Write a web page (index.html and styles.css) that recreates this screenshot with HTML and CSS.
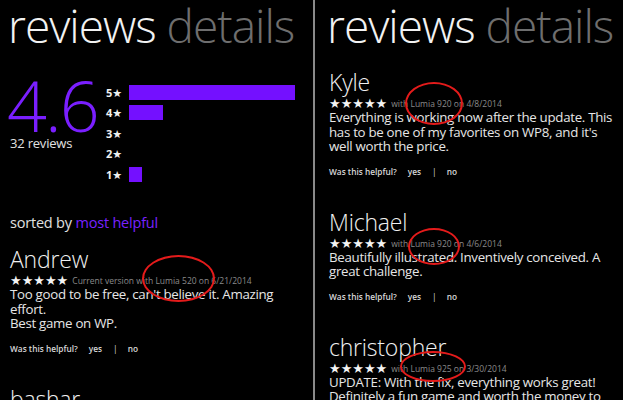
FILE: index.html
```html
<!DOCTYPE html>
<html>
<head>
<meta charset="utf-8">
<link rel="stylesheet" href="styles.css">
</head>
<body>
<div class="screens">
  <section class="panel panel-left">
    <h1 class="title"><span class="cur">reviews</span> <span class="next">details</span></h1>
    <div class="summary">
      <div class="score">
        <div class="big">4.6</div>
        <div class="count">32 reviews</div>
      </div>
      <div class="bars">
        <div class="row"><span class="lbl">5<i>★</i></span><span class="bar" style="width:166px"></span></div>
        <div class="row"><span class="lbl">4<i>★</i></span><span class="bar" style="width:34px"></span></div>
        <div class="row"><span class="lbl">3<i>★</i></span><span class="bar" style="width:0"></span></div>
        <div class="row"><span class="lbl">2<i>★</i></span><span class="bar" style="width:0"></span></div>
        <div class="row"><span class="lbl">1<i>★</i></span><span class="bar" style="width:13px"></span></div>
      </div>
    </div>
    <div class="sorted">sorted by <span class="accent">most helpful</span></div>
    <article class="review">
      <div class="name">Andrew</div>
      <div class="meta"><span class="stars">★★★★★</span><span class="info">Current version with Lumia 520 on 6/21/2014</span></div>
      <div class="text">Too good to be free, can't believe it. Amazing<br>effort.<br>Best game on WP.</div>
      <div class="helpful"><span>Was this helpful?</span><span class="yes">yes</span><span class="sep">|</span><span class="no">no</span></div>
      <span class="circle c-andrew"></span>
    </article>
    <article class="review">
      <div class="name">bashar</div>
    </article>
  </section>
  <div class="divider"></div>
  <section class="panel panel-right">
    <h1 class="title"><span class="cur">reviews</span> <span class="next">details</span></h1>
    <article class="review first">
      <div class="name">Kyle</div>
      <div class="meta"><span class="stars">★★★★★</span><span class="info">with Lumia 920 on 4/8/2014</span></div>
      <div class="text">Everything is working now after the update. This<br>has to be one of my favorites on WP8, and it's<br>well worth the price.</div>
      <div class="helpful"><span>Was this helpful?</span><span class="yes">yes</span><span class="sep">|</span><span class="no">no</span></div>
      <span class="circle c-kyle"></span>
    </article>
    <article class="review">
      <div class="name">Michael</div>
      <div class="meta"><span class="stars">★★★★★</span><span class="info">with Lumia 920 on 4/6/2014</span></div>
      <div class="text">Beautifully illustrated. Inventively conceived. A<br>great challenge.</div>
      <div class="helpful"><span>Was this helpful?</span><span class="yes">yes</span><span class="sep">|</span><span class="no">no</span></div>
      <span class="circle c-michael"></span>
    </article>
    <article class="review">
      <div class="name">christopher</div>
      <div class="meta"><span class="stars">★★★★★</span><span class="info">with Lumia 925 on 3/30/2014</span></div>
      <div class="text">UPDATE: With the fix, everything works great!<br>Definitely a fun game and worth the money to</div>
      <span class="circle c-chris"></span>
    </article>
  </section>
</div>
</body>
</html>
```

FILE: styles.css
```css
* { box-sizing: border-box; }
html, body {
  margin: 0;
  padding: 0;
  background: #000;
}
body {
  width: 623px;
  height: 400px;
  overflow: hidden;
  font-family: "Open Sans", "Noto Sans", sans-serif;
  color: #e8e8e8;
}
.screens {
  display: flex;
  height: 400px;
}
.panel {
  overflow: hidden;
  height: 400px;
}
.panel-left {
  width: 313px;
  padding-left: 10px;
}
.panel-right {
  flex: 1;
  padding-left: 14px;
}
.divider {
  width: 2px;
  background: #8a8a8a;
}
.title {
  margin: 0;
  height: 50px;
  font-size: 46px;
  line-height: 50px;
  font-weight: 300;
  white-space: nowrap;
  letter-spacing: -1px;
  margin-left: -2px;
}
.title .cur { color: #f2f2f2; }
.title .next { color: #6e6e6e; }

.summary {
  display: flex;
  margin-top: 25px;
  height: 138px;
}
.score {
  width: 96px;
}
.big {
  font-size: 70px;
  line-height: 60px;
  height: 60px;
  font-weight: 300;
  color: #7a1fff;
  letter-spacing: -2px;
  margin-left: -3px;
}
.count {
  font-size: 13px;
  line-height: 16px;
  color: #e0e0e0;
  letter-spacing: -0.2px;
}
.bars {
  padding-top: 7px;
  display: flex;
  flex-direction: column;
}
.row {
  display: flex;
  align-items: center;
  height: 20.5px;
}
.lbl {
  width: 23px;
  font-size: 11px;
  font-weight: 700;
  color: #f0f0f0;
}
.lbl i {
  font-style: normal;
  font-family: "DejaVu Sans", sans-serif;
  font-size: 11px;
}
.bar {
  display: block;
  height: 15px;
  background: #7410ff;
}
.sorted {
  font-size: 14.5px;
  line-height: 20px;
  color: #e0e0e0;
  letter-spacing: -0.2px;
}
.accent { color: #7a22ff; }

.review {
  position: relative;
  margin-top: 14px;
  margin-bottom: 32px;
}
.review.first { margin-top: 20px; }
.name {
  font-size: 23px;
  line-height: 24px;
  font-weight: 300;
  color: #f0f0f0;
  white-space: nowrap;
  letter-spacing: -0.2px;
}
.meta {
  display: flex;
  align-items: center;
  height: 16px;
  padding-top: 3px;
  white-space: nowrap;
}
.stars {
  font-family: "DejaVu Sans", sans-serif;
  font-size: 13px;
  letter-spacing: 0;
  color: #f4f4f4;
  margin-right: 4px;
}
.info {
  font-size: 8.5px;
  color: #8a8a8a;
}
.text {
  font-size: 13.3px;
  line-height: 14.5px;
  letter-spacing: -0.3px;
  white-space: nowrap;
  color: #e6e6e6;
}
.helpful {
  margin-top: 12px;
  font-size: 8.3px;
  line-height: 12px;
  font-weight: 600;
  color: #d8d8d8;
  display: flex;
  white-space: nowrap;
}
.helpful .yes { margin-left: 11px; }
.helpful .sep { margin-left: 11px; font-weight: 400; }
.helpful .no { margin-left: 10px; }

.circle {
  position: absolute;
  border: 2px solid #e41b1b;
  border-radius: 50%;
}
.c-andrew { left: 132px; top: 8px; width: 73px; height: 47px; }
.c-kyle { left: 76px; top: 12px; width: 58px; height: 43px; }
.c-michael { left: 79px; top: 18px; width: 52px; height: 37px; }
.c-chris { left: 71px; top: 16px; width: 66px; height: 31px; }
```
